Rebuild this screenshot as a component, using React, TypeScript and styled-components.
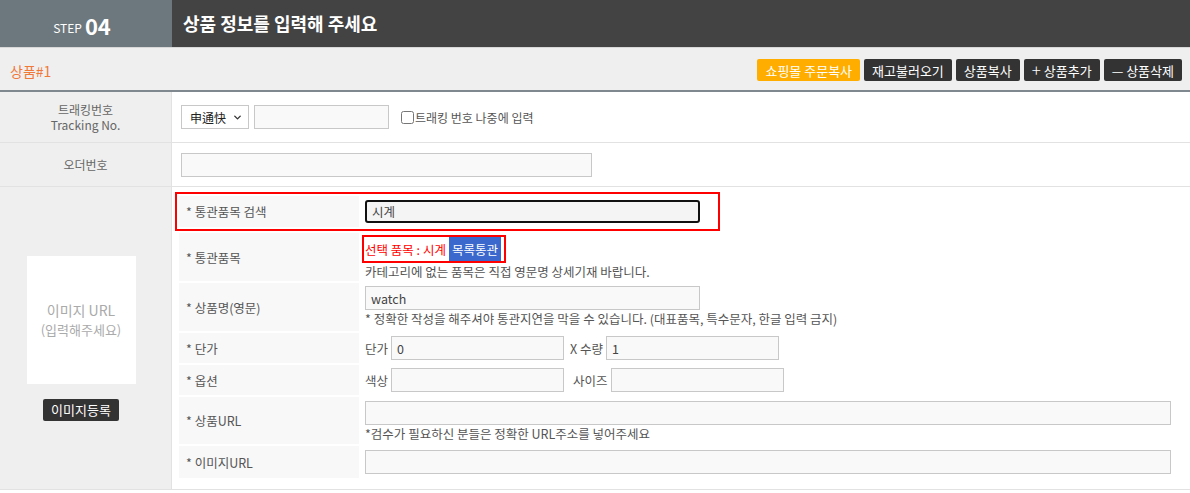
import styled, { createGlobalStyle } from "styled-components";
import { ChevronDown } from "lucide-react";

const GlobalStyle = createGlobalStyle`
  html, body {
    margin: 0;
    padding: 0;
    background: #fff;
    font-family: "Noto Sans CJK KR", "Noto Sans", sans-serif;
    color: #555;
  }
  * { box-sizing: border-box; }
`;

const Page = styled.div`
  width: 1190px;
  height: 493px;
  overflow: hidden;
`;

const StepBar = styled.div`
  display: flex;
  height: 48px;
  border-bottom: 1px solid #d8d8d8;
`;

const StepNo = styled.div`
  width: 172px;
  background: #6d787e;
  color: #fff;
  display: flex;
  align-items: center;
  justify-content: center;
  gap: 3px;
  padding: 2px 8px 0 0;

  small {
    font-size: 12px;
    margin-top: 5px;
  }
  b {
    font-size: 22px;
    font-weight: 700;
  }
`;

const StepTitle = styled.div`
  flex: 1;
  background: #434343;
  color: #fff;
  font-size: 18px;
  font-weight: 700;
  display: flex;
  align-items: center;
  padding-left: 11px;
  padding-bottom: 1px;
`;

const ProductBar = styled.div`
  height: 44px;
  background: #efefef;
  border-bottom: 2px solid #7e888e;
  display: flex;
  align-items: center;
  justify-content: space-between;
  padding: 0 8px 2px 10px;
`;

const ProductTitle = styled.span`
  color: #f0793a;
  font-size: 14px;
  padding-top: 6px;
`;

const Actions = styled.div`
  display: flex;
  gap: 4px;
  padding-top: 4px;
`;

const ActionButton = styled.button<{ $accent?: boolean }>`
  height: 22px;
  padding: 0 8px;
  border: none;
  border-radius: 2px;
  background: ${(p) => (p.$accent ? "#ffae00" : "#333")};
  color: #fff;
  font-family: inherit;
  font-size: 13px;
  display: flex;
  align-items: center;
  gap: 3px;
  white-space: nowrap;

  i {
    font-style: normal;
    font-size: 17px;
    font-weight: 300;
    margin-top: -2px;
  }
`;

const Row = styled.div<{ $h: number }>`
  display: grid;
  grid-template-columns: 172px 1fr;
  min-height: ${(p) => p.$h}px;
  border-bottom: 1px solid #e2e2e2;
`;

const HeadCell = styled.div`
  background: #efefef;
  border-right: 1px solid #e2e2e2;
  display: flex;
  flex-direction: column;
  align-items: center;
  justify-content: center;
  font-size: 12px;
  line-height: 15px;
  color: #666;
  text-align: center;
`;

const BodyCell = styled.div`
  display: flex;
  align-items: center;
  gap: 5px;
  padding-left: 9px;
  font-size: 12px;
`;

const SelectWrap = styled.div`
  position: relative;
  width: 68px;
  height: 24px;

  svg {
    position: absolute;
    right: 6px;
    top: 7px;
    pointer-events: none;
  }
`;

const Select = styled.select`
  width: 100%;
  height: 100%;
  appearance: none;
  border: 1px solid #c8c8c8;
  background: #fff;
  padding: 0 0 0 8px;
  font-family: inherit;
  font-size: 12px;
  color: #222;
`;

const Field = styled.input<{ $w?: number; $active?: boolean }>`
  width: ${(p) => (p.$w ? `${p.$w}px` : "100%")};
  height: ${(p) => (p.$active ? 23 : 24)}px;
  border: ${(p) => (p.$active ? "2px solid #111" : "1px solid #c8c8c8")};
  border-radius: ${(p) => (p.$active ? 3 : 0)}px;
  background: ${(p) => (p.$active ? "#f4f4f4" : "#f9f9f9")};
  padding: 0 5px;
  font-family: inherit;
  font-size: 12.5px;
  color: #444;
  outline: none;
`;

const CheckLabel = styled.label`
  display: flex;
  align-items: center;
  margin-left: 7px;
  color: #555;

  input {
    margin: 0 1px 0 0;
    width: 13px;
    height: 13px;
  }
`;

const ImageCell = styled(HeadCell)`
  gap: 15px;
  padding-right: 9px;
`;

const ImageBox = styled.div`
  width: 109px;
  height: 128px;
  background: #fff;
  color: #aaa;
  display: flex;
  flex-direction: column;
  align-items: center;
  justify-content: center;
  font-size: 14px;
  line-height: 20px;

  span { font-size: 13px; }
`;

const DarkButton = styled.button`
  height: 22px;
  padding: 0 8px;
  background: #333;
  color: #fff;
  border: none;
  border-radius: 2px;
  font-family: inherit;
  font-size: 13px;
`;

const Inner = styled.div`
  padding: 5px 19px 11px 7px;
  display: flex;
  flex-direction: column;
  gap: 2px;
`;

const InnerRow = styled.div<{ $h: number }>`
  display: grid;
  grid-template-columns: 180px 1fr;
  gap: 6px;
  min-height: ${(p) => p.$h}px;
`;

const Highlight = styled.div`
  width: 545px;
  margin-left: -4px;
  border: 2px solid #f00;
  padding: 2px 0 2px 2px;
`;

const Label = styled.div`
  background: #f8f8f8;
  display: flex;
  align-items: center;
  padding-left: 7px;
  font-size: 12.5px;
  color: #555;
`;

const Content = styled.div<{ $top?: number }>`
  display: flex;
  flex-direction: column;
  justify-content: ${(p) => (p.$top !== undefined ? "flex-start" : "center")};
  padding-top: ${(p) => p.$top ?? 0}px;
  font-size: 12.5px;
  color: #555;
`;

const Line = styled.div`
  display: flex;
  align-items: center;
  gap: 3px;
`;

const Note = styled.div`
  margin-top: 1px;
  line-height: 16px;
  color: #555;
`;

const Picked = styled.div`
  display: inline-flex;
  align-self: flex-start;
  align-items: stretch;
  border: 2px solid #f00;
  margin-left: -3px;
  color: #f00;
  font-size: 12.5px;
  height: 28px;

  span {
    display: flex;
    align-items: center;
    padding: 0 3px 0 1px;
  }
  b {
    display: flex;
    align-items: center;
    background: #3a68cc;
    color: #fff;
    font-weight: 400;
    padding: 0 3px;
    margin: 0 3px 0 0;
  }
`;

export default function App() {
  return (
    <Page>
      <GlobalStyle />
      <StepBar>
        <StepNo>
          <small>STEP</small>
          <b>04</b>
        </StepNo>
        <StepTitle>상품 정보를 입력해 주세요</StepTitle>
      </StepBar>

      <ProductBar>
        <ProductTitle>상품#1</ProductTitle>
        <Actions>
          <ActionButton $accent>쇼핑몰 주문복사</ActionButton>
          <ActionButton>재고불러오기</ActionButton>
          <ActionButton>상품복사</ActionButton>
          <ActionButton>
            <i>+</i>상품추가
          </ActionButton>
          <ActionButton>— 상품삭제</ActionButton>
        </Actions>
      </ProductBar>

      <Row $h={51}>
        <HeadCell>
          <div>트래킹번호</div>
          <div>Tracking No.</div>
        </HeadCell>
        <BodyCell>
          <SelectWrap>
            <Select defaultValue="sto">
              <option value="sto">申通快</option>
            </Select>
            <ChevronDown size={11} strokeWidth={3} color="#333" />
          </SelectWrap>
          <Field $w={135} />
          <CheckLabel>
            <input type="checkbox" />
            트래킹 번호 나중에 입력
          </CheckLabel>
        </BodyCell>
      </Row>

      <Row $h={44}>
        <HeadCell>오더번호</HeadCell>
        <BodyCell>
          <Field $w={411} />
        </BodyCell>
      </Row>

      <Row $h={303}>
        <ImageCell>
          <ImageBox>
            이미지 URL
            <span>(입력해주세요)</span>
          </ImageBox>
          <DarkButton>이미지등록</DarkButton>
        </ImageCell>

        <Inner>
          <Highlight>
            <InnerRow $h={31}>
              <Label>* 통관품목 검색</Label>
              <Content>
                <Field $w={335} $active defaultValue="시계" />
              </Content>
            </InnerRow>
          </Highlight>

          <InnerRow $h={48}>
            <Label>* 통관품목</Label>
            <Content $top={2}>
              <Picked>
                <span>선택 품목 : 시계</span>
                <b>목록통관</b>
              </Picked>
              <Note>카테고리에 없는 품목은 직접 영문명 상세기재 바랍니다.</Note>
            </Content>
          </InnerRow>

          <InnerRow $h={48}>
            <Label>* 상품명(영문)</Label>
            <Content $top={3}>
              <Field $w={335} defaultValue="watch" />
              <Note>* 정확한 작성을 해주셔야 통관지연을 막을 수 있습니다. (대표품목, 특수문자, 한글 입력 금지)</Note>
            </Content>
          </InnerRow>

          <InnerRow $h={30}>
            <Label>* 단가</Label>
            <Content>
              <Line>
                단가
                <Field $w={173} defaultValue="0" />
                <span style={{ marginLeft: 3 }}>X 수량</span>
                <Field $w={173} defaultValue="1" />
              </Line>
            </Content>
          </InnerRow>

          <InnerRow $h={30}>
            <Label>* 옵션</Label>
            <Content>
              <Line>
                색상
                <Field $w={173} />
                <span style={{ marginLeft: 6 }}>사이즈</span>
                <Field $w={173} />
              </Line>
            </Content>
          </InnerRow>

          <InnerRow $h={47}>
            <Label>* 상품URL</Label>
            <Content $top={4}>
              <Field />
              <Note>*검수가 필요하신 분들은 정확한 URL주소를 넣어주세요</Note>
            </Content>
          </InnerRow>

          <InnerRow $h={32}>
            <Label>* 이미지URL</Label>
            <Content>
              <Field />
            </Content>
          </InnerRow>
        </Inner>
      </Row>
    </Page>
  );
}
